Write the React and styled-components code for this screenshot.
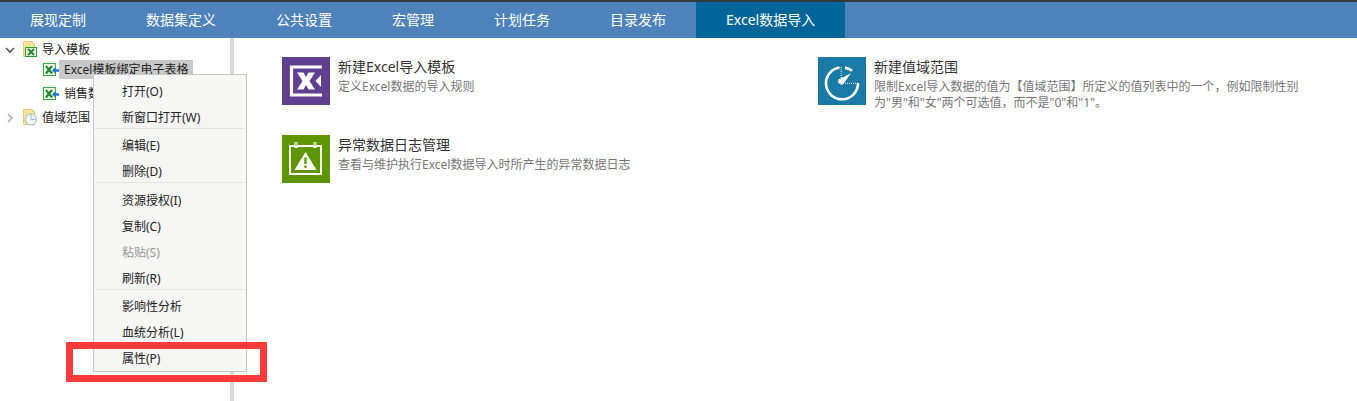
import React from "react";
import styled, { createGlobalStyle } from "styled-components";

const tabs = ["展现定制", "数据集定义", "公共设置", "宏管理", "计划任务", "目录发布", "Excel数据导入"];

const menuGroups = [
    [{ label: "打开(O)" }, { label: "新窗口打开(W)" }],
    [{ label: "编辑(E)" }, { label: "删除(D)" }],
    [{ label: "资源授权(I)" }, { label: "复制(C)" }, { label: "粘贴(S)", disabled: true }, { label: "刷新(R)" }],
    [{ label: "影响性分析" }, { label: "血统分析(L)" }, { label: "属性(P)" }],
];

const FolderIcon = ({ children }) => (
    <svg width="14" height="17" viewBox="0 0 14 17">
        <path d="M.5 .5h9v2h2v13H.5z" fill="#f9e39a" stroke="#e8cd78" />
        {children}
    </svg>
);

const ExcelFolder = () => (
    <FolderIcon>
        <rect x="2.5" y="6.5" width="11" height="9" fill="#eef7e4" stroke="#2a9a3a" />
        <path d="M5 8l6 6M11 8l-6 6" stroke="#1f8a2e" strokeWidth="2" />
    </FolderIcon>
);

const RangeFolder = () => (
    <FolderIcon>
        <circle cx="8" cy="10.5" r="5.5" fill="#f4f8fb" stroke="#9dbfd8" />
        <path d="M8 10.5V5M8 10.5h5.5" stroke="#9dbfd8" />
    </FolderIcon>
);

const ExcelLeaf = () => (
    <svg width="16" height="14" viewBox="0 0 16 14">
        <rect x=".5" y=".5" width="12" height="12" fill="#f2fbe8" stroke="#2fae45" />
        <path d="M3 3l6 7.5M9 3l-6 7.5" stroke="#1f8a2e" strokeWidth="2.2" />
        <path d="M9 7.5l3.5-3.5v2.2H16v2.6h-3.5V11z" fill="#1f78c8" />
    </svg>
);

const ChevronDown = () => (
    <svg width="10" height="10" viewBox="0 0 10 10">
        <path d="M1 3l4 4 4-4" fill="none" stroke="#555" strokeWidth="1.6" />
    </svg>
);

const ChevronRight = () => (
    <svg width="10" height="10" viewBox="0 0 10 10">
        <path d="M3 1l4 4-4 4" fill="none" stroke="#aaa" strokeWidth="1.6" />
    </svg>
);

const ImportIcon = () => (
    <svg width="48" height="48" viewBox="0 0 48 48">
        <path d="M40 10H9.5v28H40" fill="none" stroke="#fff" strokeWidth="3.2" />
        <path d="M15 15.5h6.5L24 20l2.5-4.5H33L27.5 24 33 32.5h-6.5L24 28l-2.5 4.5H15L20.5 24z" fill="#fff" />
        <path d="M33.5 24l5.5-6v12z" fill="#fff" />
    </svg>
);

const GaugeIcon = () => (
    <svg width="48" height="48" viewBox="0 0 48 48">
        <path d="M40 26.3A16 16 0 1 1 21.5 10.5" fill="none" stroke="#fff" strokeWidth="2.6" />
        <path d="M27 10.6A16 16 0 0 1 34 13.8" fill="none" stroke="#fff" strokeWidth="2.6" />
        <path d="M33 16.3L20.5 22.5a3.5 3.5 0 0 0 4.6 4.8z" fill="#fff" />
        <path d="M23.2 10v13M27 26.3h13" fill="none" stroke="#fff" strokeDasharray="1 1" />
    </svg>
);

const AlertIcon = () => (
    <svg width="48" height="48" viewBox="0 0 48 48">
        <rect x="8" y="11" width="31" height="28" fill="none" stroke="#fff" strokeWidth="2" />
        <path d="M14 7v6M33 7v6" stroke="#fff" strokeWidth="3" />
        <path d="M14 7.5v3M33 7.5v3" stroke="#5f9600" />
        <path d="M23.5 17l11 18h-22z" fill="#fff" />
        <path d="M23.5 22.5v6.5" stroke="#5f9600" strokeWidth="2.4" />
        <rect x="22.3" y="30.5" width="2.4" height="2.4" fill="#5f9600" />
    </svg>
);

const App = () => (
    <Page>
        <GlobalStyle />
        <NavBar>
            {tabs.map((tab, i) => (
                <Tab key={tab} $active={i === tabs.length - 1}>{tab}</Tab>
            ))}
        </NavBar>
        <Body>
            <Sidebar>
                <TreeRow>
                    <Toggle><ChevronDown /></Toggle>
                    <ExcelFolder />
                    <TreeLabel>导入模板</TreeLabel>
                </TreeRow>
                <TreeRow $child>
                    <ExcelLeaf />
                    <TreeLabel $selected>Excel模板绑定电子表格</TreeLabel>
                </TreeRow>
                <TreeRow $child>
                    <ExcelLeaf />
                    <TreeLabel>销售数据导入模板</TreeLabel>
                </TreeRow>
                <TreeRow>
                    <Toggle><ChevronRight /></Toggle>
                    <RangeFolder />
                    <TreeLabel>值域范围</TreeLabel>
                </TreeRow>
            </Sidebar>
            <Splitter />
            <Content>
                <Card>
                    <IconTile $color="#5f3f8f"><ImportIcon /></IconTile>
                    <CardText>
                        <CardTitle>新建Excel导入模板</CardTitle>
                        <CardDesc>定义Excel数据的导入规则</CardDesc>
                    </CardText>
                </Card>
                <Card>
                    <IconTile $color="#1a7aa5"><GaugeIcon /></IconTile>
                    <CardText>
                        <CardTitle>新建值域范围</CardTitle>
                        <CardDesc>限制Excel导入数据的值为【值域范围】所定义的值列表中的一个，例如限制性别为"男"和"女"两个可选值，而不是"0"和"1"。</CardDesc>
                    </CardText>
                </Card>
                <Card>
                    <IconTile $color="#5f9600"><AlertIcon /></IconTile>
                    <CardText>
                        <CardTitle>异常数据日志管理</CardTitle>
                        <CardDesc>查看与维护执行Excel数据导入时所产生的异常数据日志</CardDesc>
                    </CardText>
                </Card>
            </Content>
        </Body>
        <Menu>
            {menuGroups.map((group, i) => (
                <MenuGroup key={i}>
                    {group.map((item) => (
                        <MenuItem key={item.label} $disabled={item.disabled}>{item.label}</MenuItem>
                    ))}
                </MenuGroup>
            ))}
        </Menu>
        <Highlight />
    </Page>
);

export default App;

const GlobalStyle = createGlobalStyle`
    html, body {
        margin: 0;
        padding: 0;
        background: #fff;
    }
    body {
        font-family: "Noto Sans", "Noto Sans CJK SC", sans-serif;
    }
`;

const Page = styled.div`
    position: relative;
    width: 1357px;
    height: 401px;
    overflow: hidden;
    background: #fff;
`;

const NavBar = styled.div`
    display: flex;
    height: 36px;
    background: #4d82bb;
    border-top: 2px solid #33383d;
`;

const Tab = styled.div`
    padding: 0 30px;
    line-height: 36px;
    font-size: 14px;
    color: #fff;
    background: ${(p) => (p.$active ? "#006699" : "transparent")};
`;

const Body = styled.div`
    display: flex;
    height: 363px;
`;

const Sidebar = styled.div`
    width: 230px;
    padding-top: 2px;
    overflow: hidden;
`;

const Splitter = styled.div`
    width: 4px;
    background: #dedbd6;
`;

const TreeRow = styled.div`
    display: flex;
    align-items: center;
    height: 19px;
    margin-bottom: ${(p) => (p.$child ? "5px" : "1px")};
    padding-left: ${(p) => (p.$child ? "43px" : "5px")};
    white-space: nowrap;

    & > svg {
        flex: none;
    }
    & > svg:first-child {
        margin-right: 0;
    }
`;

const Toggle = styled.span`
    display: flex;
    width: 10px;
    height: 10px;
    margin-right: 8px;
`;

const TreeLabel = styled.span`
    margin-left: ${(p) => (p.$selected ? "0" : "5px")};
    padding: ${(p) => (p.$selected ? "0 5px" : "0")};
    height: 19px;
    line-height: 19px;
    font-size: 12px;
    color: #222;
    background: ${(p) => (p.$selected ? "#c9c9c9" : "transparent")};
`;

const Content = styled.div`
    flex: 1;
    display: grid;
    grid-template-columns: 536px 500px;
    grid-auto-rows: 78px;
    padding: 19px 0 0 48px;
`;

const Card = styled.div`
    display: flex;
    gap: 8px;
    align-items: flex-start;
`;

const IconTile = styled.div`
    display: flex;
    flex: none;
    width: 48px;
    height: 48px;
    background: ${(p) => p.$color};
`;

const CardText = styled.div`
    width: 448px;
`;

const CardTitle = styled.div`
    font-size: 14px;
    line-height: 20px;
    color: #333;
`;

const CardDesc = styled.div`
    margin-top: 2px;
    font-size: 12px;
    line-height: 16px;
    color: #777;
`;

const Menu = styled.div`
    position: absolute;
    left: 93px;
    top: 74px;
    width: 152px;
    background: #f6f6f4;
    border: 1px solid #c8c8c8;
    padding-bottom: 2px;
`;

const MenuGroup = styled.div`
    display: flex;
    flex-direction: column;
    gap: 4px;
    margin: 0 1px;
    padding-top: 5px;
    border-bottom: 1px solid #e2e2de;
    &:nth-child(3) {
        padding-top: 6px;
    }
    &:last-child {
        border-bottom: none;
    }
`;

const MenuItem = styled.div`
    height: 22px;
    line-height: 24px;
    padding-left: 27px;
    font-size: 12px;
    color: ${(p) => (p.$disabled ? "#999" : "#222")};
`;

const Highlight = styled.div`
    position: absolute;
    left: 66px;
    top: 342px;
    width: 187px;
    height: 26px;
    border: 7px solid #ff3b3b;
`;
